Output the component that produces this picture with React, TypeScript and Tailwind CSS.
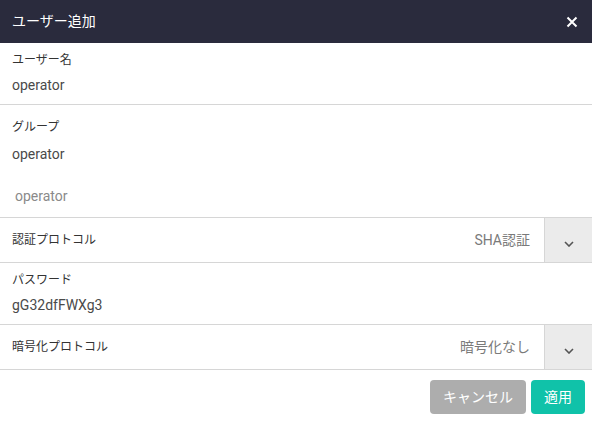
import React from "react";

const font = "font-['Roboto','Noto_Sans_CJK_JP',sans-serif]";

const Chevron = () => (
  <svg width="10" height="6" viewBox="0 0 10 6" fill="none">
    <path d="M1 1l4 4 4-4" stroke="#555" strokeWidth="1.6" />
  </svg>
);

const SelectRow = ({ label, value }: { label: string; value: string }) => (
  <div className="flex h-[45px] items-stretch border-b border-[#d6d6d6]">
    <div className="flex flex-1 items-center justify-between pl-3 pr-[14px]">
      <span className="text-[12px] text-[#333]">{label}</span>
      <span className="text-[14px] text-[#7a7a7a]">{value}</span>
    </div>
    <div className="flex w-[48px] items-center justify-center border-l border-[#d6d6d6] bg-[#ebebeb] pt-[8px]">
      <Chevron />
    </div>
  </div>
);

export default function App() {
  return (
    <div className={`w-[592px] h-[424px] bg-white ${font}`}>
      <div className="flex h-[43px] items-center justify-between bg-[#2a2b3d] pl-3 pr-[14px]">
        <span className="text-[14px] text-white">ユーザー追加</span>
        <svg width="12" height="12" viewBox="0 0 12 12">
          <path d="M1.5 1.5l9 9M10.5 1.5l-9 9" stroke="#fff" strokeWidth="2" />
        </svg>
      </div>

      <div className="flex h-[62px] flex-col border-b border-[#d6d6d6] pl-3 pt-[8px]">
        <span className="h-[18px] text-[12px] leading-[18px] text-[#333]">ユーザー名</span>
        <span className="mt-[6px] h-[20px] text-[14px] leading-[20px] text-[#4a4a4a]">operator</span>
      </div>

      <div className="flex h-[113px] flex-col border-b border-[#d6d6d6] pl-3 pt-[13px]">
        <span className="h-[18px] text-[12px] leading-[18px] text-[#333]">グループ</span>
        <span className="mt-[8px] h-[20px] text-[14px] leading-[20px] text-[#4a4a4a]">operator</span>
        <span className="mt-[22px] h-[20px] pl-[3px] text-[14px] leading-[20px] text-[#8a8a8a]">operator</span>
      </div>

      <SelectRow label="認証プロトコル" value="SHA認証" />

      <div className="flex h-[62px] flex-col border-b border-[#d6d6d6] pl-3 pt-[8px]">
        <span className="h-[18px] text-[12px] leading-[18px] text-[#333]">パスワード</span>
        <span className="mt-[6px] h-[20px] text-[14px] leading-[20px] text-[#4a4a4a]">gG32dfFWXg3</span>
      </div>

      <SelectRow label="暗号化プロトコル" value="暗号化なし" />

      <div className="flex justify-end gap-[5px] pr-[7px] pt-[10px]">
        <button className="h-[34px] w-[96px] rounded-[4px] bg-[#adadad] text-[14px] text-white">キャンセル</button>
        <button className="h-[34px] w-[54px] rounded-[4px] bg-[#10c2a9] text-[14px] text-white">適用</button>
      </div>
    </div>
  );
}
